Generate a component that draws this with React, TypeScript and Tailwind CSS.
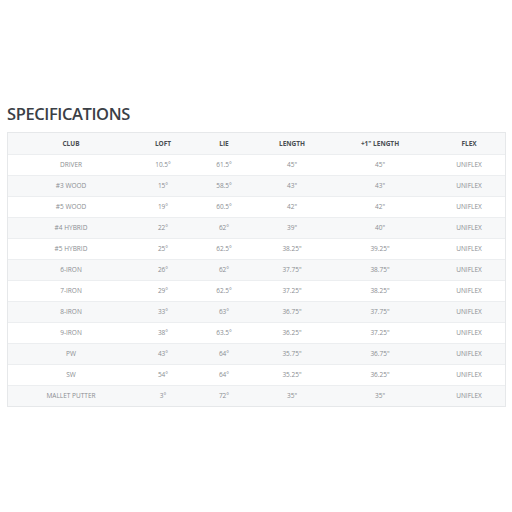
const header = ['CLUB', 'LOFT', 'LIE', 'LENGTH', '+1" LENGTH', 'FLEX']

const rows = [
  ['DRIVER', '10.5°', '61.5°', '45"', '45"', 'UNIFLEX'],
  ['#3 WOOD', '15°', '58.5°', '43"', '43"', 'UNIFLEX'],
  ['#5 WOOD', '19°', '60.5°', '42"', '42"', 'UNIFLEX'],
  ['#4 HYBRID', '22°', '62°', '39"', '40"', 'UNIFLEX'],
  ['#5 HYBRID', '25°', '62.5°', '38.25"', '39.25"', 'UNIFLEX'],
  ['6-IRON', '26°', '62°', '37.75"', '38.75"', 'UNIFLEX'],
  ['7-IRON', '29°', '62.5°', '37.25"', '38.25"', 'UNIFLEX'],
  ['8-IRON', '33°', '63°', '36.75"', '37.75"', 'UNIFLEX'],
  ['9-IRON', '38°', '63.5°', '36.25"', '37.25"', 'UNIFLEX'],
  ['PW', '43°', '64°', '35.75"', '36.75"', 'UNIFLEX'],
  ['SW', '54°', '64°', '35.25"', '36.25"', 'UNIFLEX'],
  ['MALLET PUTTER', '3°', '72°', '35"', '35"', 'UNIFLEX'],
]

const cols = 'grid grid-cols-[126px_58px_64px_72px_104px_74px]'

export default function App() {
  return (
    <div className="h-[512px] w-[512px] bg-white pt-[104px] pl-[7px] font-['Open_Sans',sans-serif]">
      <h2 className="text-[16.5px] font-semibold leading-[20px] tracking-[-0.4px] text-[#3b4046]">SPECIFICATIONS</h2>
      <div className="mt-[8px] w-[499px] border border-[#e6e8ea]">
        <div className={`${cols} h-[21px] items-center bg-[#f7f8f9] text-[6.5px] font-bold text-[#4a4e53]`}>
          {header.map((h) => (
            <div key={h} className="text-center">{h}</div>
          ))}
        </div>
        {rows.map((r, i) => (
          <div
            key={r[0]}
            className={`${cols} h-[21px] items-center border-t border-[#eceef0] text-[6.5px] text-[#8a8d91] ${i % 2 === 1 ? 'bg-[#f7f8f9]' : 'bg-white'}`}
          >
            {r.map((c, j) => (
              <div key={j} className="text-center">{c}</div>
            ))}
          </div>
        ))}
      </div>
    </div>
  )
}
